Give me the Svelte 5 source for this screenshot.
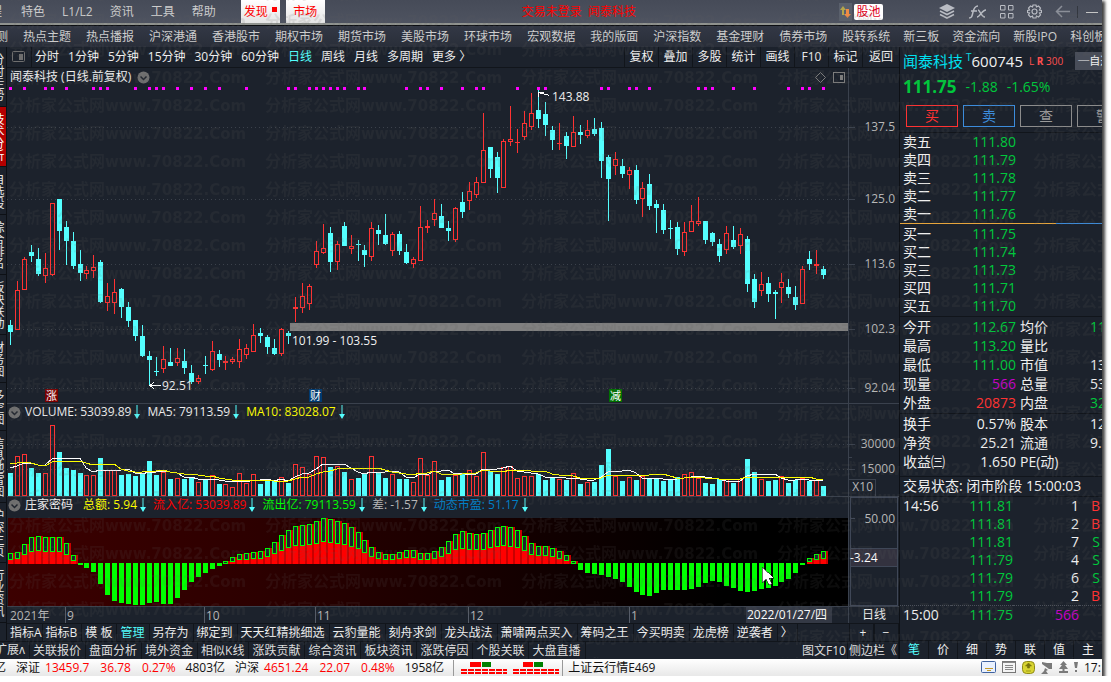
<script lang="ts">
  type Candle = [string, number, number, number, number];

  const menus = ['特色', 'L1/L2', '资讯', '工具', '帮助'];
  const markets = ['热点主题', '热点播报', '沪深港通', '香港股市', '期权市场', '期货市场', '美股市场', '环球市场', '宏观数据', '我的版面', '沪深指数', '基金理财', '债券市场', '股转系统'];
  const boards = ['新三板', '资金流向', '新股IPO', '科创板'];
  const periods = ['分时', '1分钟', '5分钟', '15分钟', '30分钟', '60分钟', '日线', '周线', '月线', '多周期', '更多 〉'];
  const tools = ['复权', '叠加', '多股', '统计', '画线', 'F10', '标记', '返回'];
  const rail = ['分时走势', '技术分析', '自选股', '综合排名', '板块联动', '财务图', '多空图', '信息地雷图', '沪深主页', '行业资讯'];
  const templates = ['指标A', '指标B', '模 板', '管理', '另存为', '绑定到', '天天红精挑细选', '云豹量能', '刻舟求剑', '龙头战法', '萧啸两点买入', '筹码之王', '今买明卖', '龙虎榜', '逆袭者', '〉'];
  const extras = ['关联报价', '盘面分析', '境外资金', '相似K线', '涨跌贡献', '综合资讯', '板块资讯', '涨跌停因', '个股关联', '大盘直播'];
  const sideTabs = ['笔', '价', '细', '势', '联', '值', '主'];

  const asks = [['卖五', '111.80'], ['卖四', '111.79'], ['卖三', '111.78'], ['卖二', '111.77'], ['卖一', '111.76']];
  const bids = [['买一', '111.75'], ['买二', '111.74'], ['买三', '111.73'], ['买四', '111.71'], ['买五', '111.70']];
  const stats = [
    ['今开', '112.67', 'down', '均价', '11', 'down'],
    ['最高', '113.20', 'down', '量比', '', ''],
    ['最低', '111.00', 'down', '市值', '13', ''],
    ['现量', '566', 'big', '总量', '53', ''],
    ['外盘', '20873', 'up', '内盘', '32', 'down']
  ];
  const basics = [
    ['换手', '0.57%', '', '股本', '12', ''],
    ['净资', '25.21', '', '流通', '9.', ''],
    ['收益㈢', '1.650', '', 'PE(动)', '', '']
  ];
  const ticks = [
    ['14:56', '111.81', '1', 'B'],
    ['', '111.81', '2', 'B'],
    ['', '111.81', '7', 'S'],
    ['', '111.79', '4', 'S'],
    ['', '111.79', '6', 'S'],
    ['', '111.79', '2', 'B']
  ];

  // direction, high, body top, body bottom, low
  const candles: Candle[] = [
    ['d', 230, 235, 242, 255], ['u', 191, 200, 240, 240], ['u', 167, 169, 200, 200], ['d', 155, 162, 166, 172],
    ['d', 158, 169, 184, 186], ['u', 163, 178, 186, 193], ['u', 113, 113, 185, 186], ['d', 109, 109, 141, 160],
    ['d', 131, 137, 151, 175], ['d', 142, 151, 176, 179], ['d', 160, 174, 183, 191], ['u', 176, 180, 184, 189],
    ['u', 165, 177, 181, 188], ['d', 170, 172, 212, 213], ['u', 193, 206, 213, 221], ['u', 189, 202, 213, 224],
    ['d', 198, 199, 217, 228], ['d', 212, 217, 231, 237], ['d', 230, 230, 246, 251], ['d', 235, 246, 266, 267],
    ['d', 261, 266, 270, 296], ['d', 267, 281, 282, 286], ['u', 256, 269, 279, 283], ['d', 258, 272, 276, 276],
    ['u', 258, 268, 273, 276], ['d', 259, 271, 278, 284], ['d', 275, 283, 292, 294], ['u', 285, 288, 292, 294],
    ['d', 266, 275, 276, 284], ['u', 251, 261, 280, 281], ['d', 260, 264, 270, 277], ['u', 266, 271, 273, 280],
    ['u', 267, 269, 272, 274], ['u', 249, 259, 272, 278], ['u', 254, 258, 265, 269], ['u', 234, 245, 262, 262],
    ['d', 238, 243, 246, 253], ['d', 245, 247, 257, 264], ['d', 249, 258, 264, 265], ['u', 238, 239, 264, 266],
    ['d', 241, 243, 246, 254], ['u', 207, 217, 219, 232], ['u', 193, 206, 218, 223], ['u', 194, 196, 214, 220],
    ['u', 151, 161, 175, 178], ['u', 134, 158, 163, 164], ['d', 137, 143, 172, 182], ['u', 151, 154, 172, 180],
    ['d', 132, 136, 156, 156], ['u', 145, 156, 159, 164], ['d', 150, 154, 155, 171], ['d', 155, 160, 165, 177],
    ['u', 132, 138, 167, 171], ['d', 135, 140, 144, 155], ['d', 124, 145, 154, 155], ['u', 142, 144, 161, 166],
    ['d', 141, 144, 161, 165], ['d', 154, 162, 173, 174], ['u', 167, 169, 174, 178], ['u', 116, 137, 171, 171],
    ['u', 130, 136, 138, 143], ['u', 109, 123, 130, 136], ['d', 114, 126, 138, 138], ['d', 131, 138, 141, 151],
    ['u', 117, 118, 150, 152], ['d', 102, 112, 122, 128], ['u', 92, 101, 111, 120], ['u', 87, 92, 105, 108],
    ['u', 23, 60, 93, 93], ['d', 57, 57, 79, 88], ['d', 62, 67, 88, 103], ['u', 49, 51, 98, 98],
    ['u', 16, 49, 52, 56], ['u', 39, 52, 53, 63], ['u', 21, 33, 47, 50], ['u', 3, 23, 37, 40],
    ['d', 0, 20, 29, 38], ['d', 12, 24, 35, 46], ['d', 36, 40, 50, 60], ['u', 33, 53, 54, 60],
    ['d', 42, 46, 56, 69], ['u', 26, 42, 57, 57], ['d', 35, 42, 45, 54], ['u', 30, 40, 46, 48],
    ['d', 28, 39, 44, 46], ['d', 32, 38, 71, 88], ['d', 65, 67, 89, 131], ['u', 62, 69, 76, 85],
    ['d', 69, 76, 84, 88], ['u', 77, 80, 85, 99], ['d', 75, 80, 110, 114], ['u', 92, 98, 109, 127],
    ['d', 84, 94, 116, 120], ['d', 110, 114, 118, 143], ['d', 114, 120, 140, 144], ['d', 130, 138, 139, 149],
    ['d', 132, 137, 159, 165], ['u', 132, 142, 162, 166], ['u', 115, 131, 142, 142], ['u', 107, 131, 134, 136],
    ['d', 131, 131, 150, 154], ['d', 142, 143, 152, 156], ['d', 149, 154, 166, 172], ['u', 136, 143, 160, 164],
    ['d', 136, 150, 157, 159], ['u', 138, 144, 156, 164], ['d', 146, 149, 194, 202], ['d', 184, 189, 212, 218],
    ['u', 182, 194, 201, 206], ['d', 187, 193, 204, 212], ['d', 200, 202, 204, 229], ['u', 183, 192, 198, 213],
    ['d', 189, 197, 204, 208], ['d', 196, 207, 215, 220], ['u', 176, 179, 214, 214], ['d', 161, 169, 174, 180],
    ['u', 160, 174, 176, 184], ['d', 176, 179, 185, 189]
  ];

  const volumes = [
    23, 40, 42, 28, 23, 23, 71, 44, 28, 26, 23, 21, 21, 38, 26, 26, 21, 22, 20, 23, 35, 21, 24, 17, 18, 17, 19, 14, 16, 21,
    12, 12, 9, 23, 13, 22, 12, 15, 15, 19, 13, 32, 29, 22, 40, 39, 29, 30, 24, 17, 18, 22, 40, 23, 18, 22, 17, 17, 14, 38,
    21, 35, 16, 19, 21, 22, 26, 20, 44, 25, 22, 29, 30, 18, 20, 20, 22, 16, 18, 17, 16, 23, 12, 14, 14, 31, 47, 20, 15, 19,
    16, 20, 18, 17, 15, 17, 19, 22, 24, 18, 13, 12, 17, 17, 13, 17, 37, 24, 17, 15, 16, 20, 13, 16, 18, 15, 16, 10
  ];
  const earlier = [38, 38, 38, 38, 36, 30, 29, 29, 30];

  const flow = [
    11, 12, 20, 27, 28, 27, 27, 27, 21, 9, -2, -5, -9, -21, -32, -38, -40, -41, -42, -42, -40, -39, -41, -41, -35, -27, -19,
    -14, -10, -6, -3, 3, 7, 10, 11, 12, 13, 16, 22, 29, 34, 38, 39, 40, 43, 46, 45, 43, 41, 37, 32, 24, 17, 12, 10, 10, 12,
    14, 14, 11, 11, 13, 17, 23, 30, 33, 31, 30, 31, 34, 37, 38, 37, 34, 28, 21, 18, 18, 16, 13, 9, 3, -7, -10, -11, -12, -14,
    -16, -19, -24, -29, -32, -33, -30, -27, -27, -27, -27, -26, -24, -20, -18, -19, -23, -25, -28, -29, -28, -26, -25, -23,
    -19, -16, -10, -2, 6, 10, 13
  ];

  const signals = [0, 2, 5, 6, 8, 12, 13, 14, 18, 20, 21, 22, 24, 26, 28, 30, 34, 40, 41, 43, 44, 45, 46, 47, 48, 50, 51, 57, 59, 60, 62, 65, 67, 68, 73, 76, 77, 85, 86, 89, 90, 92, 99, 100, 101, 104, 107, 112, 114, 115, 117];

  const priceGrid = [['137.5', 41], ['125.0', 113], ['113.6', 178], ['102.3', 243], ['92.04', 302]] as [string, number][];
  const months = [['9', 58], ['10', 197], ['11', 308], ['12', 461], ['1', 622]] as [string, number][];

  const barX = (i: number) => Math.floor(3.5 + 6.95 * i);

  function average(span: number) {
    const all = [...earlier, ...volumes];
    return volumes
      .map((_, i) => {
        const end = i + earlier.length + 1;
        const sum = all.slice(end - span, end).reduce((a, b) => a + b, 0);
        return `${barX(i)},${76 - Math.round(sum / span)}`;
      })
      .join(' ');
  }

  const ma5 = average(5);
  const ma10 = average(10);

  let period = $state('日线');
  let sideTab = $state('笔');
</script>

{#snippet fold()}
  <svg class="fold" width="13" height="13" aria-hidden="true">
    <circle cx="6.5" cy="6.5" r="6" fill="#707070" />
    <path d="M3.500 5.500l3 3 3-3" fill="none" stroke="#20252e" stroke-width="1.500" />
  </svg>
{/snippet}

{#snippet fall()}
  <svg class="fall" width="6" height="14" aria-hidden="true">
    <path d="M3 0v11" stroke="#54ffff" />
    <path d="M0 9h6l-3 5z" fill="#54ffff" />
  </svg>
{/snippet}

{#snippet quoteTable(rows: string[][])}
  <table class="stats">
    <tbody>
      {#each rows as [label, value, tone, label2, value2, tone2]}
        <tr>
          <th>{label}</th><td class={tone}>{value}</td>
          <th class="second">{label2}</th><td class="cut {tone2}">{value2}</td>
        </tr>
      {/each}
    </tbody>
  </table>
{/snippet}

{#snippet book(rows: string[][])}
  <table class="book">
    <tbody>
      {#each rows as [label, price]}
        <tr><th>{label}</th><td class="down">{price}</td><td></td></tr>
      {/each}
    </tbody>
  </table>
{/snippet}

<div class="app">
  <header class="topbar">
    <span class="clipped">程</span>
    <nav class="menus">
      {#each menus as item}<button>{item}</button>{/each}
    </nav>
    <button class="hot">发现<i></i></button>
    <button class="hot">市场</button>
    <p class="login">交易未登录&nbsp; 闻泰科技</p>
    <button class="swap" aria-label="切换">
      <svg width="13" height="18"><path d="M3 12V7H1l3-4 3 4H5v5z" fill="#b5a64a" /><path d="M7 6h3v5h2l-3.500 4L5 11h2z" fill="#ee8b45" /></svg>
    </button>
    <button class="pool">股池</button>
    <div class="icons">
      <button aria-label="图层">
        <svg width="16" height="15"><path d="M8 0l8 4-8 4-8-4z" fill="#b9bcc3" /><path d="M1 7l7 3.500L15 7M1 10.500L8 14l7-3.500" fill="none" stroke="#b9bcc3" stroke-width="1.600" /></svg>
      </button>
      <button aria-label="公式">
        <svg width="19" height="14" fill="none" stroke="#b9bcc3" stroke-width="1.500"><path d="M1 13c3 0 3-2 4-6s2-6 5-6M3 6h6M9 12c3 0 5-7 9-7M10 5c2 0 3 7 7 7" /></svg>
      </button>
      <button aria-label="窗口">
        <svg width="14" height="14" fill="none" stroke="#b9bcc3"><path d="M.5.500h4.500v4.500H.5zM8.500.500H13v4.500H8.500zM.5 8.500h4.500V13H.5zM8.500 8.500H13V13H8.500z" /></svg>
      </button>
      <button aria-label="设置">
        <svg width="15" height="15" fill="none" stroke="#b9bcc3" stroke-width="1.200"><path d="M6 1h3l.5 2 2-1 2 2-1 2 2 .5v2l-2 .5 1 2-2 2-2-1L9 14H6l-.5-2-2 1-2-2 1-2-2-.5v-2l2-.5-1-2 2-2 2 1z" /><circle cx="7.500" cy="7.500" r="2.500" /></svg>
      </button>
      <button aria-label="后退">
        <svg width="15" height="13" fill="none" stroke="#8b8f98" stroke-width="1.500"><path d="M7 1L1.500 6.500 7 12M2 6.500h13" /></svg>
      </button>
      <i class="bar"></i>
      <button aria-label="最小化"><svg width="12" height="13"><path d="M0 7.500h12" stroke="#c5c5c5" /></svg></button>
    </div>
  </header>

  <nav class="markets">
    <div class="group"><span class="clipped">测</span>{#each markets as item}<button>{item}</button>{/each}</div>
    <div class="group tight">{#each boards as item}<button>{item}</button>{/each}</div>
  </nav>

  <div class="body">
    <div class="left">
      <div class="work">
        <nav class="rail">
          {#each rail as item}<button class:on={item === '技术分析'}><span>{item}</span></button>{/each}
        </nav>

        <main>
          <div class="toolbar">
            <button class="dock" aria-label="侧栏">
              <svg width="13" height="12"><rect x=".5" y=".5" width="12" height="10" rx="1" fill="none" stroke="#6f6f6f" /><rect x="7" y="3" width="4" height="6" fill="#6f6f6f" /></svg>
            </button>
            <div class="periods">
              {#each periods as item}<button class:on={item === period} onclick={() => (period = item)}>{item}</button>{/each}
            </div>
            <div class="tools">{#each tools as item}<button>{item}</button>{/each}</div>
          </div>

          <section class="pane">
            <div class="plot">
              <h1>
                <span>闻泰科技 (日线.前复权)</span>{@render fold()}
                <svg class="corner" width="31" height="13" fill="none" stroke="#7d7d7d" aria-hidden="true">
                  <path d="M5.500 1.500l5 5-5 5-5-5z" /><rect x="18.500" y="1.500" width="11" height="10" /><rect x="25" y="4" width="3" height="5" fill="#7d7d7d" stroke="none" />
                </svg>
              </h1>
              <svg class="chart" height="317">
                {#each priceGrid as [, y]}<line class="grid" x1="0" x2="100%" y1={y + 0.5} y2={y + 0.5} />{/each}
                {#each signals as i}<rect x={barX(i) - 1} y="1" width="3" height="3" fill="#ff00ff" />{/each}
                <g transform="translate(0 4)">
                  {#each candles as [dir, high, top, bottom, low], i}
                    {@const x = barX(i)}
                    {#if dir === 'd'}
                      <rect {x} y={high} width="1" height={low - high} fill="#54ffff" />
                      <rect x={x - 2} y={top} width="5" height={Math.max(1, bottom - top)} fill="#54ffff" />
                    {:else}
                      <rect {x} y={high} width="1" height={top - high} fill="#ff3232" />
                      <rect {x} y={bottom} width="1" height={low - bottom} fill="#ff3232" />
                      {#if bottom - top < 3}
                        <rect x={x - 2} y={top} width="5" height={bottom - top} fill="#ff3232" />
                      {:else}
                        <rect x={x - 1.5} y={top + 0.5} width="4" height={bottom - top - 1} fill="none" stroke="#ff3232" />
                      {/if}
                    {/if}
                  {/each}
                </g>
                <rect x="283" y="237" width="100%" height="8" fill="#808080" />
                <path d="M531.500 6.500l11 3M531.500 11v-5h5M142.500 299.500h11M147 296l-4 3.500 4 3.500" fill="none" stroke="#fff" />
                <text x="545" y="15">143.88</text>
                <text x="155" y="304">92.51</text>
                <text x="285" y="259">101.99 - 103.55</text>
                <rect x="38" y="303" width="13" height="13" fill="#7a0000" /><text class="mark" x="39" y="314">涨</text>
                <rect x="302" y="303" width="13" height="13" fill="#003a70" /><text class="mark" x="303" y="314">财</text>
                <rect x="602" y="303" width="13" height="13" fill="#007000" /><text class="mark" x="603" y="314">减</text>
              </svg>
            </div>
            <svg class="axis" width="50" height="335">
              {#each priceGrid as [label, y]}
                <line x1="0" x2="6" y1={y + 18.5} y2={y + 18.5} stroke="#3a414d" />
                <text x="46" y={y + 22}>{label}</text>
              {/each}
            </svg>
          </section>

          <section class="pane">
            <div class="plot">
              <p class="legend vol">{@render fold()}<span>VOLUME: 53039.89</span>{@render fall()}<span>MA5: 79113.59</span>{@render fall()}<span class="yellow">MA10: 83028.07</span>{@render fall()}</p>
              <svg class="chart" height="76">
                <line class="grid" x1="0" x2="100%" y1="24.500" y2="24.500" />
                <line class="grid" x1="0" x2="100%" y1="49.500" y2="49.500" />
                {#each volumes as v, i}
                  {#if candles[i][0] === 'd'}
                    <rect x={barX(i) - 2} y={76 - v} width="5" height={v} fill="#54ffff" />
                  {:else}
                    <rect x={barX(i) - 1.5} y={76.5 - v} width="4" height={v - 1} fill="none" stroke="#ff3232" />
                  {/if}
                {/each}
                <polyline points={ma5} fill="none" stroke="#fff" />
                <polyline points={ma10} fill="none" stroke="#ffff00" />
              </svg>
            </div>
            <svg class="axis" width="50" height="92">
              <path d="M0 40.500h6M0 53.500h3M0 65.500h6" stroke="#3a414d" />
              <text x="46" y="44">30000</text><text x="46" y="69">15000</text>
              <path d="M0 75.500h26.500V92" fill="none" stroke="#3a414d" />
              <text x="24" y="87">X10</text>
            </svg>
          </section>

          <section class="pane">
            <div class="plot">
              <p class="legend">
                {@render fold()}<span>庄家密码</span>
                <span class="yellow lead">总额: 5.94</span>{@render fall()}<span class="red">流入亿: 53039.89</span>{@render fall()}<span class="lime">流出亿: 79113.59</span>{@render fall()}<span class="grey">差: -1.57</span>{@render fall()}<span class="blue">动态市盈: 51.17</span>{@render fall()}
              </p>
              <svg class="chart" height="88">
                <defs>
                  <linearGradient id="heat"><stop offset="0" stop-color="#3c0000" /><stop offset=".3" stop-color="#2c0000" /><stop offset=".85" stop-color="#000" /></linearGradient>
                </defs>
                <rect x="1" width="100%" height="88" fill="url(#heat)" />
                {#each flow as v, i}
                  {@const x = barX(i)}
                  {#if v > 0}
                    <rect x={x - 2} y={46 - v} width="7" height={v} fill="#c80000" />
                    <rect x={x - 2} y={46 - v} width="5" height={v} fill="#ff0000" />
                    <rect x={x - 1.5} y={46.5 - v} width="4" height={Math.max(1, Math.round(v / 2))} fill="#1c222c" stroke="#00ff00" />
                  {:else}
                    <rect x={x - 2} y="45" width="5" height={-v} fill="#00ff00" />
                  {/if}
                {/each}
                <path d="M755 49v16l4-4 3 6 3-1-3-6h5z" fill="#fff" stroke="#111" stroke-width=".6" />
              </svg>
            </div>
            <svg class="axis boxed" width="50" height="109">
              <rect x="1" y="52" width="48" height="17" fill="#33323f" />
              <path d="M1.500.500h47v108H1.500zM1 51.500h48M1 69.500h48" fill="none" stroke="#3f4757" />
              <path d="M2 21.500h4" stroke="#3f4757" />
              <text x="46" y="26">50.00</text>
              <text class="now" x="1" y="65">-3.24</text>
            </svg>
          </section>

          <div class="dates">
            <svg class="chart" height="16">
              <text x="3" y="13">2021年</text>
              {#each months as [label, x]}
                <path d="M{x + 0.5} 0v16" stroke="#565c68" /><text x={x + 2} y="13">{label}</text>
              {/each}
              <rect x="739" width="86" height="16" fill="#343945" />
              <text class="now" x="740" y="12">2022/01/27/四</text>
            </svg>
            <span>{period}</span>
          </div>

          <div class="templates">
            {#each templates as item}<button class:on={item === '管理'}>{item}</button>{/each}
            <div class="zoom"><button aria-label="放大">+</button><button aria-label="缩小">−</button></div>
          </div>
        </main>
      </div>

      <div class="extras">
        <button class="expand">扩展ʌ</button>
        {#each extras as item}<button>{item}</button>{/each}
        <div class="more"><button>图文F10</button><button>侧边栏《</button></div>
      </div>
    </div>

    <aside>
      <div class="stock">
        <h2>闻泰科技</h2><sup>T</sup><b>600745</b><small>L <strong>R</strong> 300</small>
        <button>─自选</button>
      </div>
      <div class="last down"><strong>111.75</strong><span>-1.88</span><span>-1.65%</span></div>
      <div class="trade">
        <button class="buy">买</button><button class="sell">卖</button><button>查</button><button>警</button>
      </div>
      {@render book(asks)}
      <div class="ratio"><i></i></div>
      {@render book(bids)}
      {@render quoteTable(stats)}
      {@render quoteTable(basics)}
      <p class="state">交易状态: 闭市阶段 15:00:03</p>
      <table class="ticks">
        <tbody>
          {#each ticks as [time, price, lots, side]}
            <tr><td>{time}</td><td class="down">{price}</td><td>{lots}</td><td class={side === 'B' ? 'up' : 'down'}>{side}</td></tr>
          {/each}
          <tr class="close"><td>15:00</td><td class="down">111.75</td><td class="big">566</td><td></td></tr>
        </tbody>
      </table>
      <nav class="side-tabs">
        {#each sideTabs as item}<button class:on={item === sideTab} onclick={() => (sideTab = item)}>{item}</button>{/each}
      </nav>
    </aside>
  </div>

  <footer>
    <div class="index">
      <span class="clipped">亿</span>
      <span>深证</span><em>13459.7</em><em>36.78</em><em>0.27%</em><span>4803亿</span>
      <span>沪深</span><em>4651.24</em><em>22.07</em><em>0.48%</em><span>1958亿</span>
    </div>
    <svg class="heatbar" width="108" height="16" aria-hidden="true">
      <path d="M16 2h11v5H16zM69 2h10v5H69z" fill="#ff0000" />
      <path d="M28 2h9v5h-9zM80 2h9v5h-9z" fill="#008000" />
      <path d="M7 10h46M7 13h46M59 10h46M59 13h46" stroke="#ff0000" stroke-width="2" stroke-dasharray="6 1" />
    </svg>
    <span class="host">上证云行情E469</span>
    <div class="tray">
      <svg width="15" height="13"><rect x=".5" y=".5" width="14" height="11" rx="1" fill="#e9f1ff" stroke="#3f62a0" /><path d="M4 7.500h8M6 9.500h4" stroke="#c39a2c" /></svg>
      <svg width="14" height="13"><rect x=".5" y=".5" width="13" height="11" fill="#f4f4f4" stroke="#777" /><path d="M1 1.500h12M3 4.500h8M3 6.500h8M3 8.500h8" stroke="#888" /></svg>
      <svg width="13" height="13"><rect x=".5" y=".5" width="12" height="12" rx="4" fill="#d8d432" stroke="#8f8b18" /><path d="M6.500 2l3 3h-2v2h-2V5h-2zM4 10h5" fill="#77720a" stroke="#77720a" stroke-width=".6" /></svg>
      <svg width="12" height="13" fill="#7a7a7a"><path d="M1 1l5 1h5v6H8L1 3zM4 7l3 2-2 1 2 3H0l3-3z" /></svg>
      <svg width="9" height="13" fill="#7a7a7a"><path d="M4.500 0L8 4H6l3 4H5.500v2H9v2H0v-2h3.500V8H0l3-4H1z" /></svg>
      <svg width="4" height="13" fill="#7a7a7a"><path d="M0 1h4L3 7H1zM1 9h2v2H1z" /></svg>
      <time>17:1</time>
    </div>
  </footer>

  <svg class="watermark" aria-hidden="true">
    <defs>
      <pattern id="site" width="256" height="28" patternUnits="userSpaceOnUse" x="9" y="7">
        <text x="0" y="20">分析家公式网<tspan class="host">www.70822.Com</tspan></text>
      </pattern>
    </defs>
    <rect width="100%" height="100%" fill="url(#site)" />
  </svg>
</div>

<style>
  :global(body) {
    background: #fff;
    overflow: hidden;
  }
  .app {
    position: relative;
    margin-right: 9px;
    background: #1c222c;
    color: #f0f0f0;
    font: 12px/16px 'Open Sans', 'Noto Sans CJK SC', sans-serif;
    box-shadow: 2px 2px 3px 1px rgba(0, 0, 0, 0.75);
    white-space: nowrap;
  }
  button {
    margin: 0;
    padding: 0;
    border: 0;
    background: none;
    color: inherit;
    font: inherit;
    white-space: nowrap;
    flex: none;
    cursor: pointer;
  }
  p, h1, h2 {
    margin: 0;
    font: inherit;
  }
  svg {
    display: block;
    flex: none;
  }
  .clipped {
    display: flex;
    justify-content: flex-end;
    overflow: hidden;
    flex: none;
  }
  .on {
    color: #54ffff;
  }
  .up { color: #ff3232; }
  .down { color: #00c83c; }
  .big { color: #c800c8; }

  /* top menu */
  .topbar {
    display: flex;
    align-items: center;
    height: 23px;
    color: #ccc;
    background: linear-gradient(#464b58, #4e5360);
    border-bottom: 2px solid #90938f;
    box-shadow: 0 1px #0c0e12;
    margin-bottom: 1px;
    overflow: hidden;
  }
  .topbar .clipped {
    width: 2px;
  }
  .menus {
    display: flex;
    gap: 17px;
    margin: 0 25px 0 19px;
  }
  .hot {
    align-self: stretch;
    display: flex;
    align-items: center;
    justify-content: center;
    gap: 4px;
    width: 39px;
    margin-right: 6px;
    background: linear-gradient(#fff, #e4e4e4);
    color: #f00;
  }
  .hot i {
    width: 5px;
    height: 5px;
    margin-bottom: 5px;
    background: #f00;
  }
  .login {
    flex: 1;
    padding-right: 12px;
    text-align: center;
    color: #f00;
  }
  .swap {
    background: #5a606c;
    margin-right: 2px;
  }
  .pool {
    width: 29px;
    background: #fff;
    border-radius: 2px;
    color: #e00020;
  }
  .icons {
    display: flex;
    align-items: center;
    gap: 13px;
    margin: 0 4px 0 56px;
  }
  .icons .bar {
    width: 1px;
    height: 12px;
    margin: 0 -5px 0 -6px;
    background: #33373f;
  }

  .markets {
    display: flex;
    gap: 13px;
    height: 21px;
    align-items: center;
    overflow: hidden;
    color: #ccc;
    background: linear-gradient(#333845, #292e39);
  }
  .group {
    display: flex;
    gap: 15px;
    flex: none;
  }
  .group.tight {
    gap: 13px;
  }
  .markets .clipped {
    width: 8px;
  }

  .body {
    display: flex;
  }
  .left {
    flex: 1;
    min-width: 0;
  }
  .work {
    display: flex;
  }
  main {
    flex: 1;
    min-width: 0;
  }

  .rail {
    width: 6px;
    height: 593px;
    overflow: hidden;
    display: flex;
    flex-direction: column;
    align-items: flex-end;
    border-right: 1px solid #0d1015;
    background: #1c222c;
  }
  .rail button {
    display: flex;
    padding: 6px 2px 5px;
    border-bottom: 1px solid #0d1015;
    writing-mode: vertical-rl;
    line-height: 14px;
    color: #e6e6e6;
  }
  .rail button.on {
    background: #b40000;
    color: #fff;
  }

  .toolbar {
    display: flex;
    height: 20px;
    line-height: 20px;
    border-bottom: 1px solid #11151b;
  }
  .dock {
    display: flex;
    align-items: center;
    padding: 0 6px 0 5px;
    border-right: 1px solid #11151b;
  }
  .periods {
    flex: 1;
    display: flex;
    gap: 9px;
    padding-left: 3px;
  }
  .tools {
    display: flex;
  }
  .tools button {
    width: 34px;
    border-left: 1px solid #11151b;
  }
  .tools button:last-child {
    width: 37px;
  }

  /* charts */
  .pane {
    display: flex;
    border-bottom: 1px solid #3a414d;
  }
  .plot {
    flex: 1;
    min-width: 0;
  }
  .chart {
    width: 100%;
    overflow: hidden;
    shape-rendering: crispEdges;
  }
  .chart text {
    fill: #f0f0f0;
  }
  .chart .mark {
    font-size: 11px;
    fill: #fff;
  }
  .grid {
    stroke: #3b414b;
    stroke-dasharray: 1 3;
  }
  .axis {
    border-left: 1px solid #3a414d;
    shape-rendering: crispEdges;
  }
  .axis text {
    fill: #b8b8b8;
    text-anchor: end;
  }
  .axis .now {
    fill: #fff;
    text-anchor: start;
  }
  h1 {
    display: flex;
    align-items: center;
    gap: 6px;
    height: 18px;
    padding: 0 2px 0 3px;
  }
  .corner {
    margin-left: auto;
  }
  .legend {
    display: flex;
    align-items: center;
    gap: 4px;
    height: 16px;
    padding: 0 1px 5px;
    overflow: hidden;
  }
  .legend.vol {
    padding-bottom: 0;
  }
  .fall {
    margin-left: -1px;
  }
  .fall + span {
    margin-left: 3px;
  }
  .lead {
    margin-left: 6px;
  }
  .yellow { color: #ffff00; }
  .red { color: #ff0000; }
  .lime { color: #00ff00; }
  .grey { color: #b8b8b8; }
  .blue { color: #0080c8; }

  .dates {
    display: flex;
    height: 16px;
    border-bottom: 1px solid #11151b;
  }
  .dates .chart {
    flex: 1;
    min-width: 0;
  }
  .dates text {
    fill: #b8b8b8;
  }
  .dates .now {
    fill: #fff;
  }
  .dates span {
    width: 50px;
    border-left: 1px solid #3a414d;
    text-align: center;
  }

  .templates,
  .extras {
    display: flex;
    height: 17px;
    line-height: 16px;
  }
  .templates button {
    padding: 0 4px 0 3px;
    border-right: 1px solid #11151b;
  }
  .templates button:first-child {
    padding-right: 0;
  }
  .zoom {
    margin-left: auto;
    display: flex;
  }
  .zoom button {
    width: 25px;
    border-left: 1px solid #11151b;
  }
  .extras {
    border-top: 1px solid #11151b;
    color: #ddd;
  }
  .extras button {
    padding: 0 4px 0 3px;
    border-right: 1px solid #11151b;
  }
  .extras .expand {
    width: 30px;
    padding: 0 4px 0 0;
    display: flex;
    justify-content: flex-end;
    overflow: hidden;
  }
  .more {
    margin-left: auto;
    display: flex;
    overflow: hidden;
  }
  .more button {
    padding: 0 1px;
  }

  /* quote panel */
  aside {
    display: flex;
    flex-direction: column;
    width: 202px;
    border-left: 1px solid #0d1015;
    overflow: hidden;
    font-size: 14px;
    line-height: 18px;
  }
  .stock {
    display: flex;
    align-items: center;
    height: 28px;
    padding-left: 3px;
  }
  h2 {
    font-size: 15px;
    color: #00e0f0;
  }
  .stock sup {
    align-self: flex-start;
    margin: 2px 0 0 3px;
    font-size: 10px;
    line-height: 16px;
    color: #00e0f0;
  }
  .stock b {
    font-size: 15px;
    font-weight: normal;
  }
  .stock small {
    margin: 0 12px 0 6px;
    font-size: 10px;
    color: #ff5050;
  }
  .stock button {
    padding: 0 3px;
    background: #484d59;
    font-size: 11px;
  }
  .last {
    display: flex;
    align-items: center;
    gap: 9px;
    height: 24px;
    padding-left: 3px;
  }
  .last strong {
    font-size: 17px;
  }
  .trade {
    display: flex;
    gap: 5px;
    padding: 6px 0 5px 6px;
    border-bottom: 1px solid #11151b;
    overflow: hidden;
  }
  .trade button {
    width: 52px;
    height: 22px;
    border: 1px solid #8c8c8c;
    color: #9a9a9a;
    line-height: 20px;
  }
  .trade .buy { border-color: #ff3232; color: #ff3232; }
  .trade .sell { border-color: #3c8cdc; color: #3c8cdc; }

  table {
    width: 100%;
    border-collapse: collapse;
    table-layout: fixed;
  }
  th, td {
    padding: 0;
    height: 18px;
    font-weight: normal;
    text-align: right;
    overflow: hidden;
  }
  th {
    width: 47px;
    padding-left: 3px;
    text-align: left;
  }
  td {
    width: 66px;
  }
  .book td:last-child {
    width: auto;
  }
  .ratio {
    height: 1px;
    background: #3c8cdc;
  }
  .ratio i {
    display: block;
    width: 77%;
    height: 1px;
    background: #e6a53c;
  }
  .ratio + :global(.book) {
    margin: 1px 0;
  }
  .stats {
    border-top: 1px solid #11151b;
  }
  .stats + .stats {
    margin: 1px 0 5px;
  }
  .stats th,
  .stats td {
    height: 19px;
  }
  .stats .second {
    width: 70px;
    padding-left: 4px;
  }
  .stats .cut {
    width: auto;
    text-align: left;
  }
  .state {
    height: 19px;
    padding-left: 3px;
    border: solid #11151b;
    border-width: 1px 0;
  }
  .ticks td:first-child {
    width: 48px;
    padding-left: 3px;
    text-align: left;
  }
  .ticks td:nth-child(2) {
    width: 62px;
  }
  .ticks td:last-child {
    width: 21px;
    padding-right: 3px;
  }
  .close {
    border-top: 1px dotted #4b505a;
  }
  .side-tabs {
    display: flex;
    height: 18px;
    margin-top: auto;
    border-top: 1px solid #11151b;
    font-size: 12px;
  }
  .side-tabs button {
    width: 29px;
    border-right: 1px solid #11151b;
  }

  footer {
    display: flex;
    align-items: center;
    height: 17px;
    background: linear-gradient(#fff, #e8e8e8);
    color: #111;
    overflow: hidden;
  }
  .index {
    display: flex;
    gap: 10px;
    padding-right: 9px;
    border-right: 1px solid #999;
  }
  .index .clipped {
    width: 6px;
  }
  .index em {
    font-style: normal;
    color: #f00;
  }
  .index span + em {
    margin-left: -5px;
  }
  .index em + em {
    margin-left: 1px;
  }
  footer > .host {
    flex: 1;
    padding-left: 5px;
    border-left: 1px solid #999;
  }
  .tray {
    display: flex;
    align-items: center;
    gap: 6px;
    width: 121px;
    overflow: hidden;
  }

  .watermark {
    position: absolute;
    inset: 0;
    width: 100%;
    height: 658px;
    pointer-events: none;
    opacity: 0.13;
  }
  .watermark text {
    font-size: 16px;
    font-weight: bold;
    fill: #606060;
  }
  .watermark .host {
    font-family: 'DejaVu Sans', sans-serif;
    font-size: 15px;
  }
</style>
